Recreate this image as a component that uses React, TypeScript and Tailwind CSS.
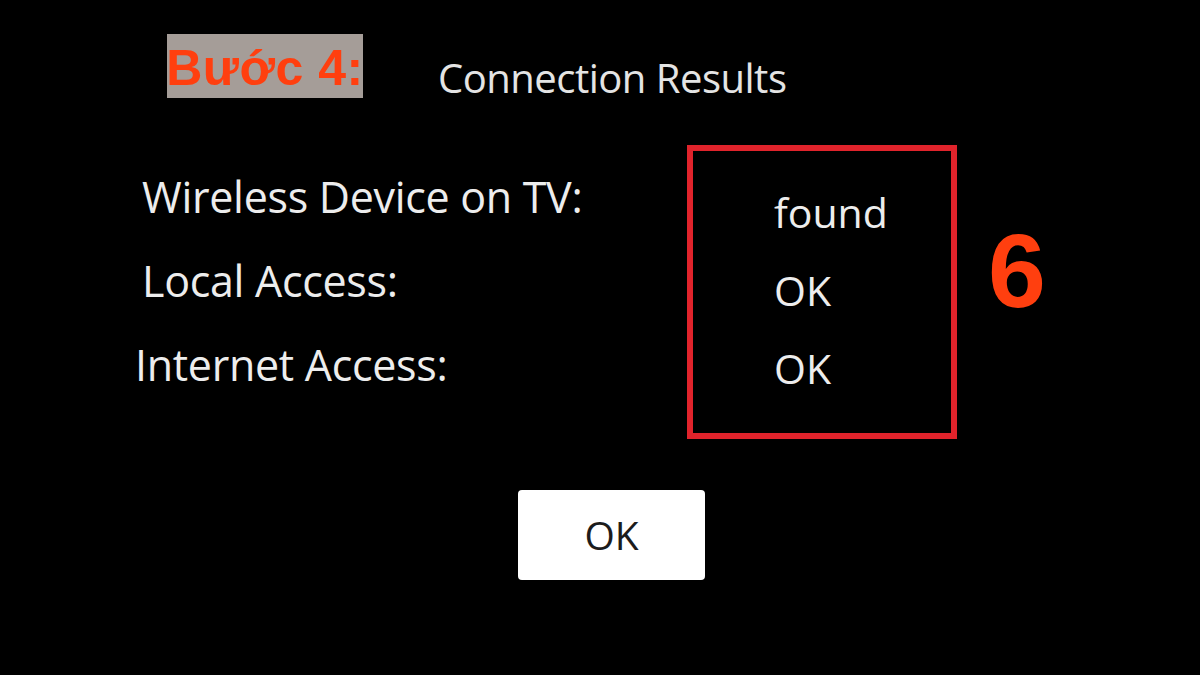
import React from "react";

export default function App() {
  const sans = { fontFamily: '"Open Sans", "DejaVu Sans", sans-serif' };
  return (
    <div className="w-[1200px] h-[675px] bg-black overflow-hidden relative" style={sans}>
      {/* header */}
      <div className="flex items-start pt-[34px] pl-[167px]">
        <div
          className="w-[196px] h-[64px] bg-[#a59d98] flex items-center justify-center pt-[4px] whitespace-nowrap text-[50px] font-bold text-[#ff3f0f] leading-none tracking-[0.5px]"
          style={{ fontFamily: '"Liberation Sans", Arial, sans-serif' }}
        >
          Bước 4:
        </div>
        <div className="ml-[75px] mt-[20px] whitespace-nowrap text-[40px] leading-[48px] text-[#e4e4e4] tracking-[-0.5px]">
          Connection Results
        </div>
      </div>

      {/* body */}
      <div className="flex items-start mt-[43px]">
        <div className="w-[687px] pt-[10px] whitespace-nowrap text-[43px] text-[#ededed] leading-[84px] tracking-[-0.3px]">
          <div className="pl-[142px]">Wireless Device on TV:</div>
          <div className="pl-[142px]">Local Access:</div>
          <div className="pl-[135px]">Internet Access:</div>
        </div>
        <div className="w-[270px] h-[294px] border-[6px] border-[#e0232b] pt-[22px] pl-[81px] text-[41px] text-[#ededed] leading-[78px]">
          <div>found</div>
          <div>OK</div>
          <div>OK</div>
        </div>
        <div
          className="ml-[31px] mt-[74px] text-[104px] font-bold leading-none text-[#ff3f0f]"
          style={{ fontFamily: '"Liberation Sans", Arial, sans-serif' }}
        >
          6
        </div>
      </div>

      {/* button */}
      <div className="flex mt-[51px] pl-[518px]">
        <div className="w-[187px] h-[90px] bg-white rounded-[4px] flex items-center justify-center text-[39px] text-[#1c1c1c]">
          OK
        </div>
      </div>
    </div>
  );
}
